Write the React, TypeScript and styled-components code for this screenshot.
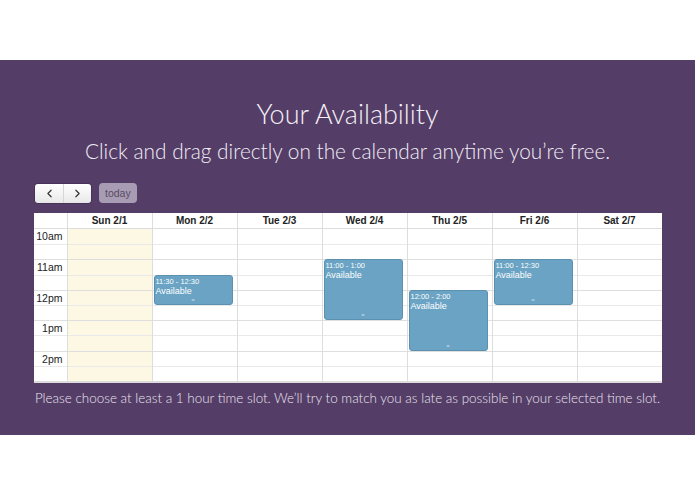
import React from 'react';
import styled, { createGlobalStyle } from 'styled-components';
import { ChevronLeft, ChevronRight } from 'lucide-react';

const GlobalStyle = createGlobalStyle`
  html, body {
    margin: 0;
    padding: 0;
    background: #fff;
  }
`;

const Band = styled.section`
  margin-top: 60px;
  background: #543d67;
  padding: 38px 0 28px;
  display: flex;
  flex-direction: column;
  align-items: center;
  font-family: Lato, 'Open Sans', sans-serif;
`;

const Title = styled.h1`
  margin: 0;
  font-size: 27px;
  line-height: 32px;
  font-weight: 300;
  color: #f4f0f7;
`;

const Subtitle = styled.p`
  margin: 8px 0 0;
  font-size: 20.8px;
  line-height: 26px;
  font-weight: 300;
  color: #f1edf5;
`;

const Toolbar = styled.div`
  align-self: stretch;
  display: flex;
  gap: 7px;
  padding: 0 34px;
  margin-top: 19px;
`;

const ButtonGroup = styled.div`
  display: flex;
  border-radius: 4px;
  overflow: hidden;
  border: 1px solid rgba(0, 0, 0, 0.15);
`;

const NavButton = styled.button<{ $first?: boolean }>`
  width: 28px;
  height: 19px;
  padding: 0;
  display: flex;
  align-items: center;
  justify-content: center;
  border: none;
  border-left: ${({ $first }) => ($first ? 'none' : '1px solid #d6d6d6')};
  background: linear-gradient(#ffffff, #e8e8e8);
  color: #333;
`;

const TodayButton = styled.button`
  height: 20px;
  padding: 0 6px;
  border: none;
  border-radius: 4px;
  background: #a89cb5;
  color: #574d60;
  font-family: 'Liberation Sans', Arial, sans-serif;
  font-size: 10.5px;
`;

const Calendar = styled.div`
  margin-top: 9px;
  width: 628px;
  background: #fff;
  border-bottom: 2px solid #dcdcdc;
  font-family: 'Liberation Sans', Arial, sans-serif;
`;

const Grid = styled.div`
  display: grid;
  grid-template-columns: 33px repeat(7, 85px);
`;

const HeadCell = styled.div`
  height: 16px;
  line-height: 16px;
  text-align: center;
  font-size: 10px;
  font-weight: bold;
  color: #222;
  border-left: 1px solid #ddd;
  border-bottom: 1px solid #ddd;
  box-sizing: border-box;
  &:first-child {
    border-left: none;
  }
`;

const Column = styled.div<{ $today?: boolean }>`
  position: relative;
  border-left: 1px solid #ddd;
  background: ${({ $today }) => ($today ? '#fcf8e3' : 'transparent')};
  &:first-child {
    border-left: none;
  }
`;

const Slot = styled.div<{ $minor?: boolean }>`
  height: 15.2px;
  box-sizing: border-box;
  border-top: 1px solid ${({ $minor }) => ($minor ? '#e9e9e9' : '#dedede')};
  &:first-child {
    border-top: none;
  }
`;

const TimeLabel = styled.div`
  height: 15px;
  box-sizing: border-box;
  padding-right: 4px;
  text-align: right;
  font-size: 10.5px;
  line-height: 15px;
  color: #222;
`;

const Event = styled.div`
  position: absolute;
  left: 1px;
  right: 4px;
  box-sizing: border-box;
  border: 1px solid #5b90af;
  border-radius: 3px;
  background: #6aa3c3;
  color: #fff;
  padding: 1px 1px 0;
  overflow: hidden;
`;

const EventTime = styled.div`
  font-size: 7.5px;
  line-height: 9px;
`;

const EventTitle = styled.div`
  font-size: 9px;
  line-height: 10px;
`;

const Resizer = styled.div`
  position: absolute;
  left: 0;
  right: 0;
  bottom: 1px;
  text-align: center;
  font-size: 6px;
  line-height: 6px;
  color: #c9dfeb;
`;

const Note = styled.p`
  margin: 6px 0 0;
  font-size: 13.45px;
  line-height: 18px;
  font-weight: 300;
  color: #ebe5f0;
`;

const SLOT = 15.2;

const days = ['Sun 2/1', 'Mon 2/2', 'Tue 2/3', 'Wed 2/4', 'Thu 2/5', 'Fri 2/6', 'Sat 2/7'];
const hours = ['10am', '11am', '12pm', '1pm', '2pm'];

// start/end in half-hour slots from 10am
const events: { day: number; start: number; end: number; label: string }[] = [
  { day: 1, start: 3, end: 5, label: '11:30 - 12:30' },
  { day: 3, start: 2, end: 6, label: '11:00 - 1:00' },
  { day: 4, start: 4, end: 8, label: '12:00 - 2:00' },
  { day: 5, start: 2, end: 5, label: '11:00 - 12:30' },
];

const App: React.FC = () => {
  const slots = Array.from({ length: 10 }, (_, i) => i);

  return (
    <>
      <GlobalStyle />
      <Band>
        <Title>Your Availability</Title>
        <Subtitle>Click and drag directly on the calendar anytime you’re free.</Subtitle>
        <Toolbar>
          <ButtonGroup>
            <NavButton $first>
              <ChevronLeft size={13} strokeWidth={2.2} />
            </NavButton>
            <NavButton>
              <ChevronRight size={13} strokeWidth={2.2} />
            </NavButton>
          </ButtonGroup>
          <TodayButton disabled>today</TodayButton>
        </Toolbar>

        <Calendar>
          <Grid>
            <HeadCell />
            {days.map((d) => (
              <HeadCell key={d}>{d}</HeadCell>
            ))}
          </Grid>
          <Grid>
            <Column>
              {slots.map((i) => (
                <Slot key={i} $minor={i % 2 === 1}>
                  {i % 2 === 0 && <TimeLabel>{hours[i / 2]}</TimeLabel>}
                </Slot>
              ))}
            </Column>
            {days.map((d, di) => (
              <Column key={d} $today={di === 0}>
                {slots.map((i) => (
                  <Slot key={i} $minor={i % 2 === 1} />
                ))}
                {events
                  .filter((e) => e.day === di)
                  .map((e) => (
                    <Event
                      key={e.label}
                      style={{ top: e.start * SLOT, height: (e.end - e.start) * SLOT }}
                    >
                      <EventTime>{e.label}</EventTime>
                      <EventTitle>Available</EventTitle>
                      <Resizer>=</Resizer>
                    </Event>
                  ))}
              </Column>
            ))}
          </Grid>
        </Calendar>

        <Note>
          Please choose at least a 1 hour time slot. We’ll try to match you as late as possible in your selected time slot.
        </Note>
      </Band>
    </>
  );
};

export default App;
